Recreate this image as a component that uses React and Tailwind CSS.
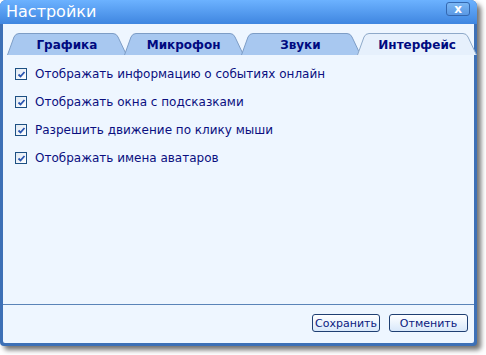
import { useState } from 'react';

const tabs = ['Графика', 'Микрофон', 'Звуки', 'Интерфейс'];

const options = [
  'Отображать информацию о событиях онлайн',
  'Отображать окна с подсказками',
  'Разрешить движение по клику мыши',
  'Отображать имена аватаров',
];

function TabShape({ active }) {
  return (
    <svg className="absolute inset-0" width="120" height="22" viewBox="0 0 120 22">
      <path
        d="M0.5 22 L7 4 Q8.5 0.5 12 0.5 L106 0.5 Q109.5 0.5 111 4 L119.5 22"
        fill={active ? '#e6f0fc' : '#a8c8f0'}
        stroke={active ? '#8ea9c9' : '#7d9dc6'}
        strokeWidth="1"
      />
    </svg>
  );
}

function CheckBox() {
  return (
    <span className="flex h-[12px] w-[12px] shrink-0 items-center justify-center border border-[#1d5083] bg-gradient-to-br from-[#dfe8f2] to-white">
      <svg width="9" height="9" viewBox="0 0 9 9">
        <path d="M1.5 4.5 L3.5 6.5 L7.5 2" fill="none" stroke="#2a55b0" strokeWidth="1.8" />
      </svg>
    </span>
  );
}

export default function App() {
  const [activeTab, setActiveTab] = useState(3);

  return (
    <div className="h-[355px] w-[486px] bg-white font-['DejaVu_Sans',sans-serif]">
      <div className="flex h-[346px] w-[477px] flex-col rounded-t-[6px] rounded-b-[4px] bg-[#3d70b6] shadow-[4px_4px_5px_rgba(0,0,0,0.55)]">
        <div className="flex h-[24px] items-center justify-between rounded-t-[6px] bg-gradient-to-b from-[#6cb2ff] to-[#3f86e0] pl-[6px] pr-[7px]">
          <span className="text-[16px] leading-none text-white">Настройки</span>
          <span className="mb-[6px] flex h-[14px] w-[24px] items-center justify-center rounded-[3px] border border-[#3468b0] bg-gradient-to-b from-[#7ab6f4] to-[#5a98e4] text-[12px] font-bold leading-none text-white">
            x
          </span>
        </div>

        <div className="mx-[3px] mb-[3px] flex flex-1 flex-col rounded-b-[2px] bg-[#eef6ff]">
          <div className="flex h-[31px] items-end pl-[4px]">
            {tabs.map((tab, index) => (
              <button
                key={tab}
                onClick={() => setActiveTab(index)}
                className={`relative -mr-[3px] flex h-[22px] w-[120px] items-center justify-center pt-[1px] text-[12px] font-bold text-[#000a80] ${index === activeTab ? 'z-10' : ''}`}
              >
                <TabShape active={index === activeTab} />
                <span className="relative">{tab}</span>
              </button>
            ))}
          </div>

          <div className="flex flex-1 flex-col pt-[5px] pl-[12px]">
            {options.map((option) => (
              <label key={option} className="flex h-[28px] items-center gap-[8px] text-[12px] text-[#0a0f80]">
                <CheckBox />
                <span>{option}</span>
              </label>
            ))}
          </div>

          <div className="flex h-[39px] items-start justify-end gap-[9px] border-t border-[#5a84b8] pt-[9px] pr-[6px]">
            <button className="h-[18px] w-[68px] rounded-[3px] border border-[#1f3f72] bg-gradient-to-b from-white to-[#d8e8fa] text-[11px] leading-none text-[#0a1a80]">
              Сохранить
            </button>
            <button className="h-[18px] w-[79px] rounded-[3px] border border-[#1f3f72] bg-gradient-to-b from-white to-[#d8e8fa] text-[11px] leading-none text-[#0a1a80]">
              Отменить
            </button>
          </div>
        </div>
      </div>
    </div>
  );
}
